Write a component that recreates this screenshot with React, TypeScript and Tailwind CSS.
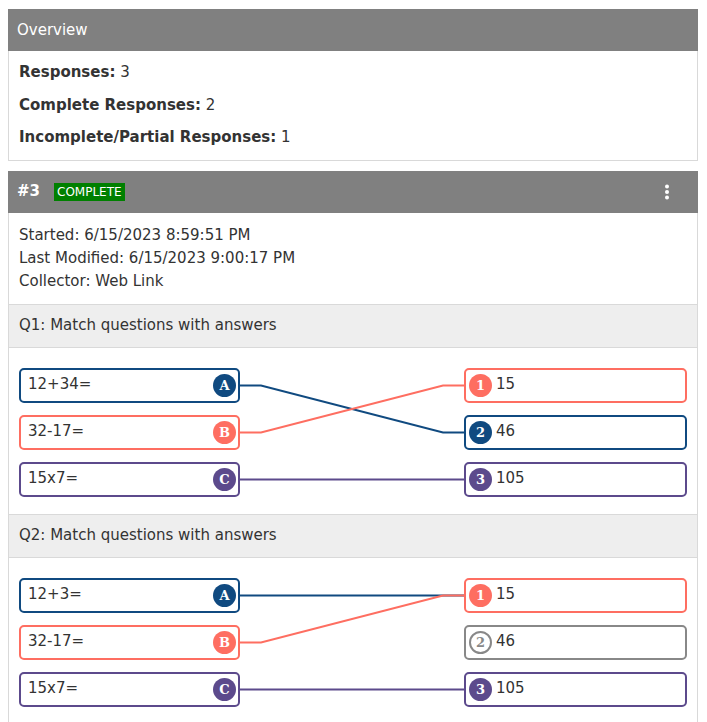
import React from "react";

type C = "navy" | "coral" | "purple" | "gray";

const borderCls: Record<C, string> = {
  navy: "border-[#104a80]",
  coral: "border-[#fe6e61]",
  purple: "border-[#5c4a8c]",
  gray: "border-[#888888]",
};
const bgCls: Record<C, string> = {
  navy: "bg-[#104a80] text-white",
  coral: "bg-[#fe6e61] text-white",
  purple: "bg-[#5c4a8c] text-white",
  gray: "bg-white text-[#888888] border-2 border-[#888888]",
};
const stroke: Record<C, string> = {
  navy: "#104a80",
  coral: "#fe6e61",
  purple: "#5c4a8c",
  gray: "#888888",
};

function Dot({ label, color }: { label: string; color: C }) {
  return (
    <span
      className={`w-[23px] h-[23px] rounded-full flex items-center justify-center shrink-0 font-bold text-[13px] leading-none ${bgCls[color]}`}
      style={{ fontFamily: '"DejaVu Serif", serif' }}
    >
      {label}
    </span>
  );
}

function LeftBox({ text, label, color }: { text: string; label: string; color: C }) {
  return (
    <div className={`h-[35px] border-2 rounded-[5px] flex items-center justify-between pl-[7px] pr-[2px] ${borderCls[color]}`}>
      <span className="-mt-[2px]">{text}</span>
      <Dot label={label} color={color} />
    </div>
  );
}

function RightBox({ text, label, color, dot }: { text: string; label: string; color: C; dot: C }) {
  return (
    <div className={`h-[35px] border-2 rounded-[5px] flex items-center gap-[4px] pl-[3px] ${borderCls[color]}`}>
      <Dot label={label} color={dot} />
      <span className="-mt-[2px]">{text}</span>
    </div>
  );
}

type Line = { from: number; to: number; color: C };

function Match({
  left,
  right,
  lines,
}: {
  left: { text: string; label: string; color: C }[];
  right: { text: string; label: string; color: C; dot: C }[];
  lines: Line[];
}) {
  const ys = [17.5, 64.5, 111.5];
  return (
    <div className="flex pt-[20px] pb-[17px] px-[10px]">
      <div className="w-[221px] flex flex-col gap-[12px]">
        {left.map((l) => (
          <LeftBox key={l.label} {...l} />
        ))}
      </div>
      <svg width="224" height="129" viewBox="0 0 224 129" className="shrink-0">
        {lines.map((ln, i) => {
          const y1 = ys[ln.from];
          const y2 = ys[ln.to];
          const d = y1 === y2 ? `M0 ${y1} H224` : `M0 ${y1} H21 L203 ${y2} H224`;
          return <path key={i} d={d} fill="none" stroke={stroke[ln.color]} strokeWidth="2" />;
        })}
      </svg>
      <div className="flex-1 flex flex-col gap-[12px]">
        {right.map((r) => (
          <RightBox key={r.label} {...r} />
        ))}
      </div>
    </div>
  );
}

export default function App() {
  const font = { fontFamily: '"DejaVu Sans", "Open Sans", sans-serif' };
  return (
    <div className="bg-white min-h-[722px] pt-[9px] text-[15px] text-[#333333]" style={font}>
      <div className="ml-[8px] w-[690px]">
        {/* Overview */}
        <div className="border border-[#d9d9d9]">
          <div className="bg-[#808080] text-white h-[42px] flex items-center px-[9px] -mx-px -mt-px">Overview</div>
          <div className="flex flex-col gap-[10px] px-[10px] pt-[10px] pb-[11px] leading-[22.5px]">
            <div>
              <span className="font-bold">Responses:</span> 3
            </div>
            <div>
              <span className="font-bold">Complete Responses:</span> 2
            </div>
            <div>
              <span className="font-bold">Incomplete/Partial Responses:</span> 1
            </div>
          </div>
        </div>

        {/* Response card */}
        <div className="border border-[#d9d9d9] mt-[10px]">
          <div className="bg-[#808080] text-white h-[42px] flex items-center px-[9px] -mx-px -mt-px">
            <span className="font-bold">#3</span>
            <span className="ml-[14px] bg-[#008000] text-[12px] leading-[18px] px-[3px] uppercase">Complete</span>
            <svg width="6" height="16" viewBox="0 0 6 16" className="ml-auto mr-[19px]">
              <circle cx="3" cy="2.5" r="2" fill="white" />
              <circle cx="3" cy="8" r="2" fill="white" />
              <circle cx="3" cy="13.5" r="2" fill="white" />
            </svg>
          </div>
          <div className="px-[10px] pt-[11px] pb-[11px] leading-[23px]">
            <div>Started: 6/15/2023 8:59:51 PM</div>
            <div>Last Modified: 6/15/2023 9:00:17 PM</div>
            <div>Collector: Web Link</div>
          </div>

          <div className="bg-[#eeeeee] border-y border-[#d9d9d9] h-[44px] flex items-center px-[10px]">
            Q1: Match questions with answers
          </div>
          <Match
            left={[
              { text: "12+34=", label: "A", color: "navy" },
              { text: "32-17=", label: "B", color: "coral" },
              { text: "15x7=", label: "C", color: "purple" },
            ]}
            right={[
              { text: "15", label: "1", color: "coral", dot: "coral" },
              { text: "46", label: "2", color: "navy", dot: "navy" },
              { text: "105", label: "3", color: "purple", dot: "purple" },
            ]}
            lines={[
              { from: 0, to: 1, color: "navy" },
              { from: 2, to: 2, color: "purple" },
              { from: 1, to: 0, color: "coral" },
            ]}
          />

          <div className="bg-[#eeeeee] border-y border-[#d9d9d9] h-[44px] flex items-center px-[10px]">
            Q2: Match questions with answers
          </div>
          <Match
            left={[
              { text: "12+3=", label: "A", color: "navy" },
              { text: "32-17=", label: "B", color: "coral" },
              { text: "15x7=", label: "C", color: "purple" },
            ]}
            right={[
              { text: "15", label: "1", color: "coral", dot: "coral" },
              { text: "46", label: "2", color: "gray", dot: "gray" },
              { text: "105", label: "3", color: "purple", dot: "purple" },
            ]}
            lines={[
              { from: 0, to: 0, color: "navy" },
              { from: 2, to: 2, color: "purple" },
              { from: 1, to: 0, color: "coral" },
            ]}
          />
        </div>
      </div>
    </div>
  );
}
